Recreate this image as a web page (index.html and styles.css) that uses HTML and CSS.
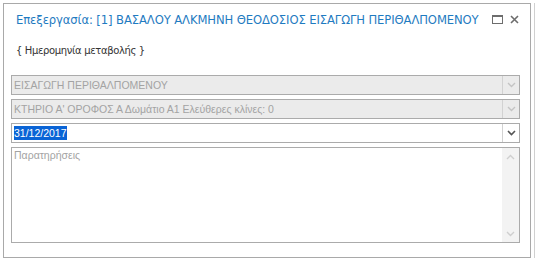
FILE: index.html
```html
<!DOCTYPE html>
<html lang="el">
<head>
    <meta charset="UTF-8">
    <title>Επεξεργασία</title>
    <link rel="stylesheet" href="styles.css">
</head>
<body>
    <div class="window">
        <div class="titlebar">
            <div class="title">Επεξεργασία: [1] ΒΑΣΑΛΟΥ ΑΛΚΜΗΝΗ ΘΕΟΔΟΣΙΟΣ ΕΙΣΑΓΩΓΗ ΠΕΡΙΘΑΛΠΟΜΕΝΟΥ</div>
            <div class="win-buttons">
                <svg width="11" height="9" viewBox="0 0 11 9"><rect x="0.5" y="0.5" width="10" height="8" fill="none" stroke="#6d6d6d"/><line x1="0" y1="1.5" x2="11" y2="1.5" stroke="#6d6d6d"/></svg>
                <svg width="9" height="9" viewBox="0 0 9 9"><path d="M1 1 L8 8 M8 1 L1 8" stroke="#6d6d6d" stroke-width="1.6"/></svg>
            </div>
        </div>

        <div class="caption">{ Ημερομηνία μεταβολής }</div>

        <div class="fields">
            <div class="combo disabled">
                <div class="combo-text">ΕΙΣΑΓΩΓΗ ΠΕΡΙΘΑΛΠΟΜΕΝΟΥ</div>
                <div class="combo-btn"><svg width="9" height="6" viewBox="0 0 9 6"><path d="M1 1 L4.5 4.5 L8 1" fill="none" stroke="#c4c4c4" stroke-width="1.4"/></svg></div>
            </div>
            <div class="combo disabled">
                <div class="combo-text">ΚΤΗΡΙΟ Α' ΟΡΟΦΟΣ Α Δωμάτιο Α1 Ελεύθερες κλίνες: 0</div>
                <div class="combo-btn"><svg width="9" height="6" viewBox="0 0 9 6"><path d="M1 1 L4.5 4.5 L8 1" fill="none" stroke="#c4c4c4" stroke-width="1.4"/></svg></div>
            </div>
            <div class="combo">
                <div class="combo-text"><span class="selected">31/12/2017</span></div>
                <div class="combo-btn"><svg width="9" height="6" viewBox="0 0 9 6"><path d="M1 1 L4.5 4.5 L8 1" fill="none" stroke="#555" stroke-width="1.6"/></svg></div>
            </div>
            <div class="memo">
                <div class="memo-text">Παρατηρήσεις</div>
                <div class="scrollbar">
                    <svg width="9" height="6" viewBox="0 0 9 6"><path d="M1 5 L4.5 1.5 L8 5" fill="none" stroke="#cfcfcf" stroke-width="1.4"/></svg>
                    <svg width="9" height="6" viewBox="0 0 9 6"><path d="M1 1 L4.5 4.5 L8 1" fill="none" stroke="#cfcfcf" stroke-width="1.4"/></svg>
                </div>
            </div>
        </div>
    </div>
</body>
</html>
```

FILE: styles.css
```css
body {
    margin: 0;
    background: #fff;
    font-family: "DejaVu Sans", Verdana, sans-serif;
}

.window {
    box-sizing: border-box;
    margin: 3px 0 0 3px;
    width: 528px;
    height: 255px;
    border: 1px solid #a9a9a9;
    box-shadow: 3px 0 0 #fff, 4px 0 0 #d0d0d0;
    display: flex;
    flex-direction: column;
}

.titlebar {
    display: flex;
    align-items: center;
    height: 31px;
    padding: 0 11px 0 12px;
}

.title {
    flex: 1;
    min-width: 0;
    color: #1f7bc1;
    font-size: 11.6px;
    letter-spacing: -0.1px;
    white-space: nowrap;
}

.win-buttons {
    display: flex;
    align-items: center;
    gap: 7px;
}

.caption {
    padding: 10px 0 0 12px;
    height: 22px;
    font-size: 10px;
    letter-spacing: -0.35px;
    color: #333;
}

.fields {
    display: flex;
    flex-direction: column;
    gap: 4px;
    padding: 8px 10px 0 7px;
    font-family: "Liberation Sans", Arial, sans-serif;
}

.combo {
    display: flex;
    height: 20px;
    box-sizing: border-box;
    border: 1px solid #ababab;
    background: #fff;
}

.combo.disabled {
    background: #ebebeb;
    color: #a3a3a3;
}

.combo-text {
    flex: 1;
    padding-left: 2px;
    font-size: 10.5px;
    line-height: 18px;
    white-space: nowrap;
    overflow: hidden;
}

.selected {
    background: #0a64d6;
    color: #fff;
    padding: 1px 0;
}

.combo-btn {
    width: 16px;
    border-left: 1px solid #d2d2d2;
    display: flex;
    align-items: center;
    justify-content: center;
}

.memo {
    display: flex;
    height: 96px;
    box-sizing: border-box;
    border: 1px solid #ababab;
}

.memo-text {
    flex: 1;
    padding: 1px 0 0 2px;
    font-size: 10.5px;
    color: #a3a3a3;
}

.scrollbar {
    width: 17px;
    background: #f3f3f3;
    display: flex;
    flex-direction: column;
    justify-content: space-between;
    align-items: center;
    padding: 6px 0 5px;
}
```
